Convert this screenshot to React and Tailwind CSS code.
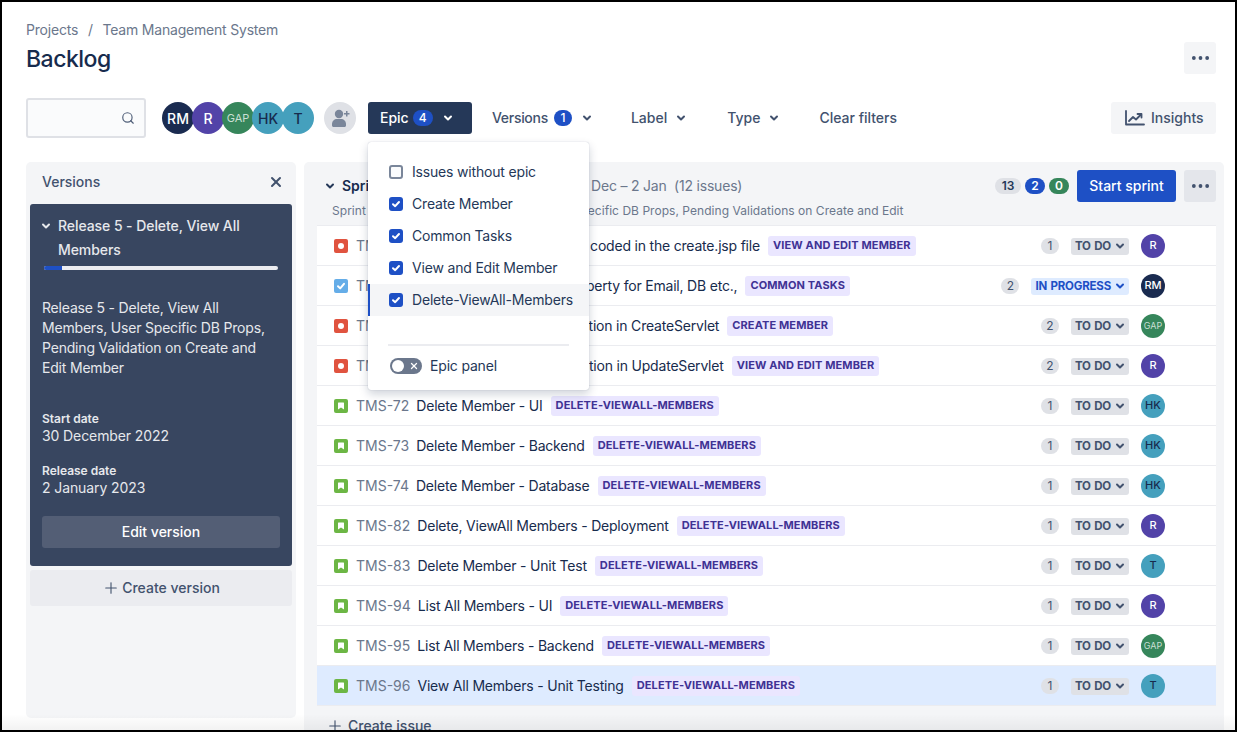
import { Search, X, Plus } from 'lucide-react';

const font = { fontFamily: 'Inter, "Noto Sans", sans-serif' };

const issues = [
  { type: 'bug', id: 'TMS-51', summary: 'Remove the DB props hard coded in the create.jsp file', epic: 'VIEW AND EDIT MEMBER', est: 1, status: 'TO DO', who: 'R' },
  { type: 'task', id: 'TMS-52', summary: 'Create Servlet context property for Email, DB etc.,', epic: 'COMMON TASKS', est: 2, status: 'IN PROGRESS', who: 'RM' },
  { type: 'bug', id: 'TMS-53', summary: 'Add the Servlet side validation in CreateServlet', epic: 'CREATE MEMBER', est: 2, status: 'TO DO', who: 'GAP' },
  { type: 'bug', id: 'TMS-54', summary: 'Add the Servlet side validation in UpdateServlet', epic: 'VIEW AND EDIT MEMBER', est: 2, status: 'TO DO', who: 'R' },
  { type: 'story', id: 'TMS-72', summary: 'Delete Member - UI', epic: 'DELETE-VIEWALL-MEMBERS', est: 1, status: 'TO DO', who: 'HK' },
  { type: 'story', id: 'TMS-73', summary: 'Delete Member - Backend', epic: 'DELETE-VIEWALL-MEMBERS', est: 1, status: 'TO DO', who: 'HK' },
  { type: 'story', id: 'TMS-74', summary: 'Delete Member - Database', epic: 'DELETE-VIEWALL-MEMBERS', est: 1, status: 'TO DO', who: 'HK' },
  { type: 'story', id: 'TMS-82', summary: 'Delete, ViewAll Members - Deployment', epic: 'DELETE-VIEWALL-MEMBERS', est: 1, status: 'TO DO', who: 'R' },
  { type: 'story', id: 'TMS-83', summary: 'Delete Member - Unit Test', epic: 'DELETE-VIEWALL-MEMBERS', est: 1, status: 'TO DO', who: 'T' },
  { type: 'story', id: 'TMS-94', summary: 'List All Members - UI', epic: 'DELETE-VIEWALL-MEMBERS', est: 1, status: 'TO DO', who: 'R' },
  { type: 'story', id: 'TMS-95', summary: 'List All Members - Backend', epic: 'DELETE-VIEWALL-MEMBERS', est: 1, status: 'TO DO', who: 'GAP' },
  { type: 'story', id: 'TMS-96', summary: 'View All Members - Unit Testing', epic: 'DELETE-VIEWALL-MEMBERS', est: 1, status: 'TO DO', who: 'T', selected: true },
];

const avatarColors = {
  RM: 'bg-[#1a2b50] text-white',
  R: 'bg-[#5243a8] text-white',
  GAP: 'bg-[#36865b] text-[#c9dfd3]',
  HK: 'bg-[#45a0bd] text-[#172b4d]',
  T: 'bg-[#45a0bd] text-[#172b4d]',
};

function Chevron({ className = '' }) {
  return (
    <svg viewBox="0 0 12 12" className={className} fill="none" stroke="currentColor" strokeWidth="2" strokeLinecap="round" strokeLinejoin="round">
      <path d="M3 4.500 6 7.500 9 4.500" />
    </svg>
  );
}

function Dots() {
  return (
    <svg viewBox="0 0 20 6" className="w-[19px] h-[6px]" fill="currentColor">
      <circle cx="3" cy="3" r="2" />
      <circle cx="10" cy="3" r="2" />
      <circle cx="17" cy="3" r="2" />
    </svg>
  );
}

function IssueIcon({ type }) {
  if (type === 'bug') {
    return (
      <span className="w-[14px] h-[14px] rounded-[2px] bg-[#e0533f] flex items-center justify-center shrink-0">
        <span className="w-[6px] h-[6px] rounded-full bg-white" />
      </span>
    );
  }
  if (type === 'task') {
    return (
      <span className="w-[14px] h-[14px] rounded-[2px] bg-[#65ade8] flex items-center justify-center shrink-0">
        <svg viewBox="0 0 14 14" className="w-[14px] h-[14px]" fill="none" stroke="white" strokeWidth="2" strokeLinecap="round" strokeLinejoin="round">
          <path d="M4 7.200 6.200 9.400 10 4.800" />
        </svg>
      </span>
    );
  }
  return (
    <span className="w-[14px] h-[14px] rounded-[2px] bg-[#6cb644] flex items-center justify-center shrink-0">
      <svg viewBox="0 0 14 14" className="w-[14px] h-[14px]" fill="white">
        <path d="M4.500 3.500h5a.5.5 0 0 1 .5.5v6.600L7 8.600l-3 2V4a.5.5 0 0 1 .5-.5z" />
      </svg>
    </span>
  );
}

function Avatar({ who, small }) {
  const size = small
    ? who === 'GAP' ? 'w-6 h-6 text-[9px] font-normal' : 'w-6 h-6 text-[11px] font-medium'
    : who === 'GAP' ? 'w-8 h-8 text-[11px] font-normal' : 'w-8 h-8 text-[14px] font-medium';
  return (
    <span className={`${size} ${avatarColors[who]} rounded-full flex items-center justify-center shrink-0`}>
      {who}
    </span>
  );
}

function IssueRow({ issue }) {
  const inProgress = issue.status === 'IN PROGRESS';
  return (
    <div className={`h-10 pt-px flex items-center pl-[17px] pr-[51px] border-b border-[#ebecf0] text-sm text-[#172b4d] whitespace-nowrap ${issue.selected ? 'bg-[#deebff]' : 'bg-white'}`}>
      <IssueIcon type={issue.type} />
      <span className="ml-2 text-[#6b778c]">{issue.id}</span>
      <span className="ml-[7px] tracking-[-0.2px]">{issue.summary}</span>
      <span className="ml-2 h-5 px-[5px] rounded-[3px] bg-[#eae6ff] text-[#403294] text-[11px] font-bold tracking-[0.12px] flex items-center">
        {issue.epic}
      </span>
      <span className="ml-auto w-[18px] h-4 rounded-full bg-[#dfe1e6] text-[#42526e] text-xs flex items-center justify-center">
        {issue.est}
      </span>
      <span className={`ml-3 h-[17px] pl-[4px] pr-[3px] rounded-[3px] text-[11.5px] font-bold tracking-[-0.2px] [word-spacing:1px] flex items-center gap-[3px] ${inProgress ? 'bg-[#deebff] text-[#1e50c5]' : 'bg-[#dfe1e6] text-[#42526e]'}`}>
        {issue.status}
        <Chevron className="w-3 h-3" />
      </span>
      <span className="ml-3">
        <Avatar who={issue.who} small />
      </span>
    </div>
  );
}

function EpicMenu() {
  const items = [
    ['Issues without epic', false],
    ['Create Member', true],
    ['Common Tasks', true],
    ['View and Edit Member', true],
    ['Delete-ViewAll-Members', true],
  ];
  return (
    <div className="absolute z-20 top-10 left-0 w-[221px] h-[248px] bg-white rounded-[3px] shadow-[0_4px_10px_rgba(9,30,66,0.2),0_0_1px_rgba(9,30,66,0.3)] pt-[14px] font-normal tracking-[-0.18px]">
      {items.map(([label, checked], i) => (
        <div key={label} className={`h-8 flex items-center text-sm text-[#253858] ${i === 4 ? 'bg-[#f4f5f7] border-l-2 border-[#1e50c5] pl-[19px]' : 'pl-[21px]'}`}>
          {checked ? (
            <span className="w-[14px] h-[14px] rounded-[3px] bg-[#1e50c5] flex items-center justify-center">
              <svg viewBox="0 0 14 14" className="w-[14px] h-[14px]" fill="none" stroke="white" strokeWidth="2" strokeLinecap="round" strokeLinejoin="round">
                <path d="M4 7.200 6.200 9.200 10 5" />
              </svg>
            </span>
          ) : (
            <span className="w-[14px] h-[14px] rounded-[3px] border-2 border-[#7a869a] bg-[#fafbfc]" />
          )}
          <span className="ml-[9px]">{label}</span>
        </div>
      ))}
      <div className="mx-5 mt-[28px] border-t-2 border-[#ebecf0]" />
      <div className="ml-[22px] mt-[10px] flex items-center text-sm text-[#253858]">
        <span className="w-8 h-4 rounded-full bg-[#6b778c] flex items-center justify-between pl-[2px] pr-[3px]">
          <span className="w-3 h-3 rounded-full bg-white" />
          <X className="w-[10px] h-[10px] text-white" strokeWidth={3} />
        </span>
        <span className="ml-2">Epic panel</span>
      </div>
    </div>
  );
}

function FilterButton({ label, className = '', children }) {
  return (
    <button className={`h-8 flex items-center text-sm font-medium text-[#42526e] ${className}`}>
      {label}
      {children}
      <Chevron className="w-3 h-3" />
    </button>
  );
}

function VersionsPanel() {
  return (
    <aside className="w-[270px] h-[556px] shrink-0 bg-[#f4f5f7] rounded-[5px] px-1">
      <div className="h-[42px] pb-[2px] flex items-center justify-between pl-3 pr-2 text-sm font-medium text-[#42526e]">
        Versions
        <X className="w-4 h-4 text-[#42526e]" strokeWidth={3} />
      </div>
      <div className="h-[362px] rounded-[3px] bg-[#384660] text-[#e6e8ec] pl-3 pr-3 pt-[10px]">
        <div className="flex text-sm font-medium leading-6 tracking-[-0.07px]">
          <Chevron className="w-3 h-3 mt-[6px] ml-[-2px] shrink-0" />
          <span className="ml-[6px]">Release 5 - Delete, View All Members</span>
        </div>
        <div className="mt-[4px] ml-[2px] mr-[2px] h-1 rounded-full bg-[#ebecf0] overflow-hidden">
          <div className="w-[18px] h-1 bg-[#1e50c5]" />
        </div>
        <p className="mt-[28px] text-sm leading-5 tracking-[-0.19px]">
          Release 5 - Delete, View All Members, User Specific DB Props, Pending Validation on Create and Edit Member
        </p>
        <div className="mt-[33px] text-xs font-semibold leading-4">Start date</div>
        <div className="mt-[-1px] text-sm leading-5 tracking-[-0.1px]">30 December 2022</div>
        <div className="mt-[17px] text-xs font-semibold leading-4">Release date</div>
        <div className="mt-[-1px] text-sm leading-5 tracking-[-0.1px]">2 January 2023</div>
        <button className="mt-[18px] w-full h-8 rounded-[3px] bg-[#535e75] text-sm font-medium text-white">
          Edit version
        </button>
      </div>
      <button className="mt-1 w-full h-9 rounded-[3px] bg-[#ebecf0] text-sm font-medium text-[#42526e] flex items-center justify-center gap-[2px]">
        <Plus className="w-[18px] h-[18px]" strokeWidth={1.5} />
        Create version
      </button>
    </aside>
  );
}

function SprintPanel() {
  return (
    <section className="w-[920px] shrink-0 bg-[#f4f5f7] rounded-t-[5px] pl-[13px] pr-[8px]">
      <div className="h-[63px] flex items-start relative">
        <div className="pt-[8px] min-w-0">
          <div className="h-8 flex items-center text-sm whitespace-nowrap">
            <Chevron className="w-3 h-3 text-[#253858] ml-[7px]" />
            <span className="ml-[6px] font-semibold text-[#172b4d]">Sprint 5</span>
            <span className="ml-[196px] text-[#6b778c] tracking-[-0.2px]">Dec – 2 Jan&nbsp; (12 issues)</span>
          </div>
          <div className="mt-[1px] pl-[15px] text-xs text-[#6b778c] tracking-[0.04px] whitespace-nowrap">
            Sprint 5 - Delete, View All Members, User Specific DB Props, Pending Validations on Create and Edit
          </div>
        </div>
        <div className="ml-auto mt-[8px] flex items-center">
          <span className="w-[26px] h-4 rounded-full bg-[#dfe1e6] text-[#253858] text-xs font-semibold flex items-center justify-center">13</span>
          <span className="ml-1 w-5 h-4 rounded-full bg-[#1e50c5] text-white text-xs font-semibold flex items-center justify-center">2</span>
          <span className="ml-1 w-5 h-4 rounded-full bg-[#36865b] text-white text-xs font-semibold flex items-center justify-center">0</span>
          <button className="ml-2 w-[99px] h-8 rounded-[3px] bg-[#1e50c5] text-white text-sm font-medium">Start sprint</button>
          <button className="ml-2 w-8 h-8 rounded-[3px] bg-[#e4e6eb] text-[#42526e] flex items-center justify-center">
            <Dots />
          </button>
        </div>
      </div>
      <div className="border-t border-[#ebecf0]">
        {issues.map((issue) => (
          <IssueRow key={issue.id} issue={issue} />
        ))}
      </div>
      <div className="h-10 flex items-center pl-[9px] text-sm font-medium text-[#42526e]">
        <Plus className="w-[18px] h-[18px]" strokeWidth={1.5} />
        <span className="ml-[4px]">Create issue</span>
      </div>
    </section>
  );
}

export default function App() {
  return (
    <div style={font} className="w-[1237px] h-[732px] bg-white border-2 border-black overflow-hidden relative flex flex-col">
      <header className="pl-6 pr-[19px] shrink-0">
        <div className="pt-[18px] h-[38px] text-sm leading-5 text-[#6b778c] tracking-[-0.2px]">
          Projects <span className="mx-[6px]">/</span> Team Management System
        </div>
        <div className="h-8 flex items-center justify-between mt-[2px]">
          <h1 className="pt-[2px] text-[23px] font-medium tracking-[-0.5px] text-[#172b4d]">Backlog</h1>
          <button className="w-8 h-8 rounded-[3px] bg-[#f4f5f7] text-[#42526e] flex items-center justify-center">
            <Dots />
          </button>
        </div>
        <div className="mt-6 h-10 flex items-center">
          <div className="w-[120px] h-10 rounded-[3px] border-2 border-[#dfe1e6] bg-[#fafbfc] flex items-center justify-end pr-[9px]">
            <Search className="w-[14px] h-[14px] text-[#505f79]" strokeWidth={2} />
          </div>
          <div className="ml-4 flex items-center">
            {['RM', 'R', 'GAP', 'HK', 'T'].map((who, i) => (
              <span key={who} className={i === 0 ? '' : 'ml-[-2px]'}>
                <Avatar who={who} />
              </span>
            ))}
          </div>
          <span className="ml-[10px] w-8 h-8 rounded-full bg-[#dfe1e6] flex items-center justify-center">
            <svg viewBox="0 0 24 24" className="w-6 h-6" fill="#7a869a">
              <circle cx="11" cy="8" r="4.200" />
              <path d="M4 18c0-3 2.400-5 5-5h4c2.600 0 5 2 5 5v1.500c0 .8-.7 1.500-1.500 1.500h-11C4.700 21 4 20.300 4 19.500z" />
              <path d="M18 5h1.500v2H21.500v1.500h-2v2H18v-2h-2V7h2z" />
            </svg>
          </span>
          <div className="relative ml-3">
            <button className="w-[104px] h-8 rounded-[3px] bg-[#253858] text-white text-sm font-medium flex items-center pl-3">
              Epic
              <span className="ml-[4px] w-5 h-4 rounded-full bg-[#1e50c5] text-xs flex items-center justify-center">4</span>
              <Chevron className="w-3 h-3 ml-[9px]" />
            </button>
            <EpicMenu />
          </div>
          <FilterButton label={<span className="tracking-[-0.3px]">Versions</span>} className="ml-5">
            <span className="ml-[6px] mr-[9px] w-[18px] h-4 rounded-full bg-[#1e50c5] text-white text-xs flex items-center justify-center">1</span>
          </FilterButton>
          <FilterButton label="Label" className="ml-[38px] gap-[8px]" />
          <FilterButton label="Type" className="ml-[40px] gap-[8px]" />
          <button className="ml-[39px] text-sm font-medium text-[#42526e]">Clear filters</button>
          <button className="ml-auto w-[105px] h-8 rounded-[3px] bg-[#f4f5f7] text-sm font-medium text-[#42526e] flex items-center pl-[14px] gap-[6px]">
            <svg viewBox="0 0 20 16" className="w-5 h-4" fill="none" stroke="currentColor" strokeWidth="1.800" strokeLinecap="round" strokeLinejoin="round">
              <path d="M1 1v13.500h18" />
              <path d="M4 11l4-4 3 2.500 5-5" />
              <path d="M12.500 4H16.500v3.500" />
            </svg>
            Insights
          </button>
        </div>
      </header>
      <main className="mt-6 flex-1 min-h-0 pl-6 flex gap-2 items-start overflow-hidden">
        <VersionsPanel />
        <SprintPanel />
      </main>
      {/* faint fade along the bottom edge */}
      <div className="absolute bottom-0 inset-x-0 h-4 bg-linear-to-b from-transparent to-black/5 pointer-events-none z-30" />
    </div>
  );
}
